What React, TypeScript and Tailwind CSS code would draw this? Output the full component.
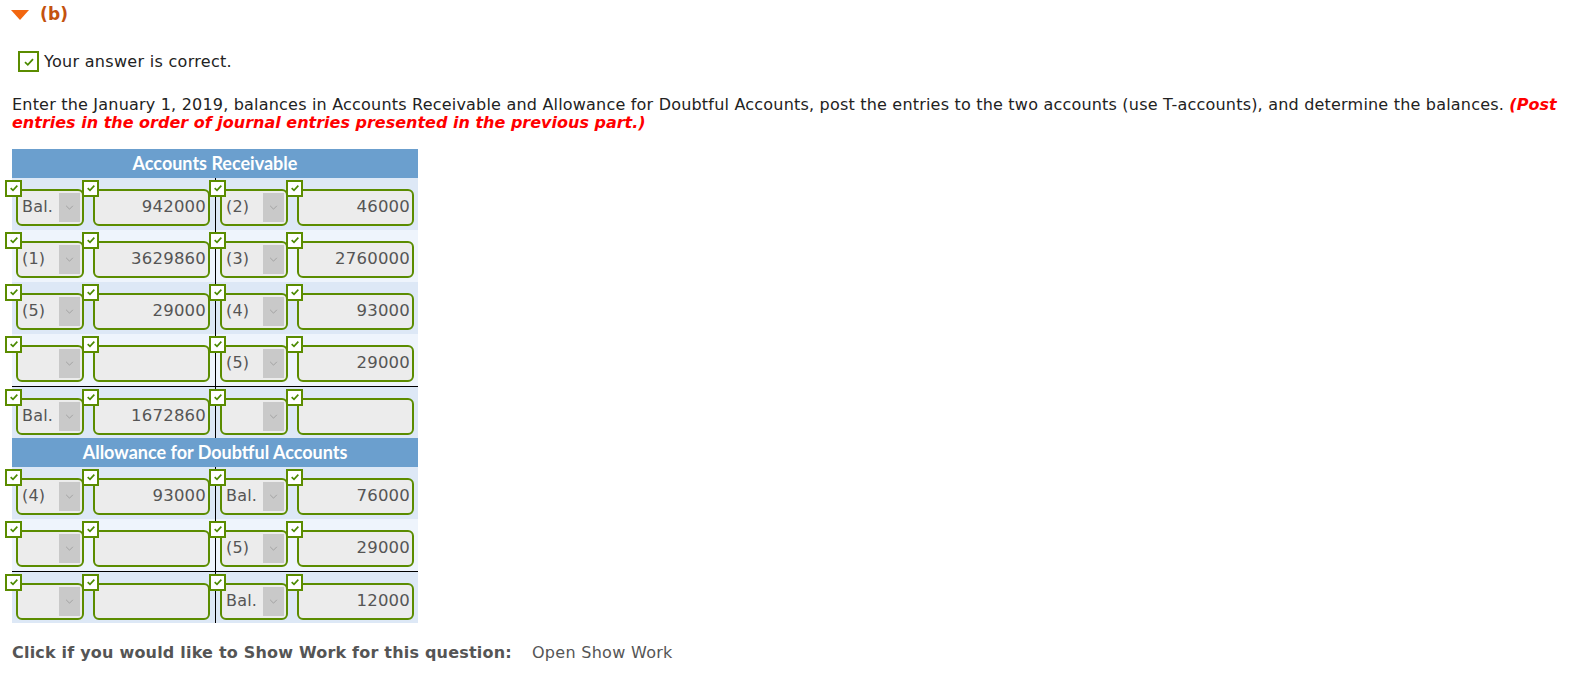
import React from "react";

type Side = { sel: string; amt: string };
type Row = { left: Side; right: Side; line?: boolean };

const receivable: Row[] = [
  { left: { sel: "Bal.", amt: "942000" }, right: { sel: "(2)", amt: "46000" } },
  { left: { sel: "(1)", amt: "3629860" }, right: { sel: "(3)", amt: "2760000" } },
  { left: { sel: "(5)", amt: "29000" }, right: { sel: "(4)", amt: "93000" } },
  { left: { sel: "", amt: "" }, right: { sel: "(5)", amt: "29000" } },
  { left: { sel: "Bal.", amt: "1672860" }, right: { sel: "", amt: "" }, line: true },
];

const allowance: Row[] = [
  { left: { sel: "(4)", amt: "93000" }, right: { sel: "Bal.", amt: "76000" } },
  { left: { sel: "", amt: "" }, right: { sel: "(5)", amt: "29000" } },
  { left: { sel: "", amt: "" }, right: { sel: "Bal.", amt: "12000" }, line: true },
];

function Check({ className = "" }: { className?: string }) {
  return (
    <span
      className={`flex items-center justify-center bg-white border-2 border-[#5b8c00] ${className}`}
    >
      <svg viewBox="0 0 12 12" className="w-[10px] h-[10px]">
        <path d="M2 6.2 L4.8 8.8 L10 3.2" fill="none" stroke="#4b8a00" strokeWidth="2" />
      </svg>
    </span>
  );
}

function Field({ children, kind }: { children?: React.ReactNode; kind: "sel" | "amt" }) {
  return (
    <div className="relative">
      <Check className="absolute -left-[11px] -top-[9px] w-[17px] h-[17px] z-10" />
      {kind === "sel" ? (
        <div className="w-[68px] h-[37px] rounded-[6px] border-2 border-[#5b8c00] bg-[#ececec] flex overflow-hidden">
          <span className="flex-1 pl-[4px] flex items-center text-[#555]">{children}</span>
          <span className="w-[21px] my-[2px] mr-[2px] bg-[#c9c9c9] flex items-center justify-center">
            <svg viewBox="0 0 10 6" className="w-[9px] h-[5px]">
              <path d="M1 1 L5 5 L9 1" fill="none" stroke="#9a9a9a" strokeWidth="1" />
            </svg>
          </span>
        </div>
      ) : (
        <div className="w-[117px] h-[37px] rounded-[6px] border-2 border-[#5b8c00] bg-[#ececec] flex items-center justify-end pr-[2px] text-[#555] text-[16.5px]">
          {children}
        </div>
      )}
    </div>
  );
}

function Half({ side }: { side: Side }) {
  return (
    <div className="flex pl-[4px] gap-[9px]">
      <Field kind="sel">{side.sel}</Field>
      <Field kind="amt">{side.amt}</Field>
    </div>
  );
}

function Account({ title, rows }: { title: string; rows: Row[] }) {
  return (
    <div>
      <div className="h-[29px] bg-[#6b9fce] flex items-center justify-center text-white font-bold text-[18px] tracking-normal font-['Lato',sans-serif]">
        {title}
      </div>
      {rows.map((r, i) => (
        <div
          key={i}
          className={`flex h-[52px] ${i % 2 === 0 ? "bg-[#dde8f6]" : "bg-[#eef4fc]"} ${
            r.line ? "border-t border-black" : ""
          }`}
        >
          <div className="w-[204px] pt-[11px] border-r border-black">
            <Half side={r.left} />
          </div>
          <div className="flex-1 pt-[11px]">
            <Half side={r.right} />
          </div>
        </div>
      ))}
    </div>
  );
}

export default function App() {
  return (
    <div className="bg-white min-h-[677px] font-['DejaVu_Sans','Verdana',sans-serif] text-[#222] text-[16px] tracking-[0.2px]">
      <div className="flex items-center gap-[10px] pt-[2px] pl-[10px]">
        <svg viewBox="0 0 20 12" className="w-[20px] h-[12px]">
          <path d="M1 1 H19 L10 11 Z" fill="#f2660f" />
        </svg>
        <span className="text-[#c4520f] font-bold text-[17px]">(b)</span>
      </div>

      <div className="flex items-center gap-[5px] mt-[22px] pl-[18px] tracking-[0.3px]">
        <span className="w-[21px] h-[21px] border-2 border-[#5b8c00] flex items-center justify-center bg-white">
          <svg viewBox="0 0 12 12" className="w-[12px] h-[12px]">
            <path d="M2 6.2 L4.8 8.8 L10 3.2" fill="none" stroke="#4b8a00" strokeWidth="1.8" />
          </svg>
        </span>
        <span>Your answer is correct.</span>
      </div>

      <p className="mt-[22px] pl-[12px] pr-[8px] leading-[18px]">
        Enter the January 1, 2019, balances in Accounts Receivable and Allowance for Doubtful Accounts, post the
        entries to the two accounts (use T-accounts), and determine the balances.{" "}
        <span className="text-[#ff0000] font-bold italic tracking-normal">
          (Post entries in the order of journal entries presented in the previous part.)
        </span>
      </p>

      <div className="ml-[12px] mt-[17px] w-[406px]">
        <Account title="Accounts Receivable" rows={receivable} />
        <Account title="Allowance for Doubtful Accounts" rows={allowance} />
      </div>

      <div className="mt-[18px] px-[12px] flex gap-[20px] text-[#555]">
        <span className="font-bold">Click if you would like to Show Work for this question:</span>
        <span className="tracking-[0.3px]">Open Show Work</span>
      </div>
    </div>
  );
}
